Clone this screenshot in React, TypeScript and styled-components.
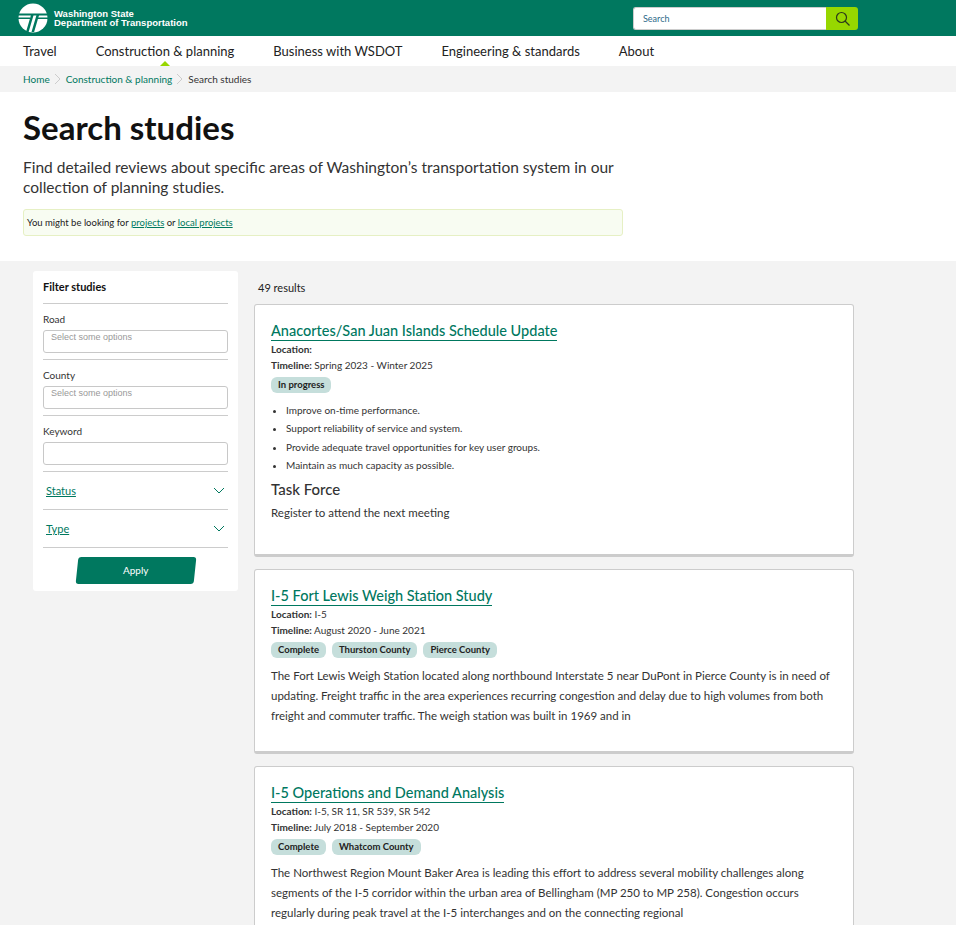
import { createGlobalStyle } from "styled-components";
import styled from "styled-components";

const GlobalStyle = createGlobalStyle`
  html, body {
    margin: 0;
    padding: 0;
    height: 925px;
    overflow: hidden;
    background: #fff;
    font-family: Lato, "Liberation Sans", sans-serif;
    color: #333;
  }
  * { box-sizing: border-box; }
`;

const Masthead = styled.header`
  height: 36px;
  background: #00785f;
  display: flex;
  align-items: center;
  padding-left: 18px;
`;

const Brand = styled.a`
  display: flex;
  align-items: center;
  gap: 6px;
  width: 615px;
`;

const BrandText = styled.div`
  color: #fff;
  font-family: "Liberation Sans", sans-serif;
  font-weight: 700;
  font-size: 9.5px;
  line-height: 9.5px;
`;

const SearchBox = styled.form`
  display: flex;
  width: 225px;
  height: 23px;
`;

const SearchInput = styled.div`
  flex: 1;
  background: #fff;
  border: 1px solid #ccc;
  border-right: none;
  border-radius: 3px 0 0 3px;
  font-size: 9px;
  line-height: 21px;
  padding-left: 9px;
  color: #2d6a8a;
`;

const SearchButton = styled.div`
  width: 32px;
  background: #97d700;
  border-radius: 0 3px 3px 0;
  display: flex;
  align-items: center;
  justify-content: center;
`;

const MainNav = styled.nav`
  height: 30px;
  display: flex;
  align-items: center;
  padding-left: 23px;
  gap: 39px;
  font-size: 13px;
  color: #222;
`;

const NavItem = styled.span<{ $active?: boolean }>`
  position: relative;
  line-height: 30px;
  ${({ $active }) =>
    $active &&
    `&::after {
      content: "";
      position: absolute;
      left: 50%;
      bottom: 0;
      margin-left: -5px;
      border-left: 5px solid transparent;
      border-right: 5px solid transparent;
      border-bottom: 5px solid #97d700;
    }`}
`;

const Breadcrumb = styled.div`
  height: 26px;
  background: #f3f3f3;
  display: flex;
  align-items: center;
  padding-left: 23px;
  font-size: 10px;
  color: #333;
`;

const CrumbLink = styled.a`
  color: #00785f;
`;

const CrumbSep = styled.svg`
  width: 16px;
  height: 12px;
`;

const Intro = styled.section`
  height: 169px;
  padding: 15px 23px 0;
`;

const Title = styled.h1`
  margin: 0;
  font-size: 33px;
  line-height: 40px;
  font-weight: 700;
  color: #111;
`;

const Lead = styled.p`
  margin: 10px 0 0;
  width: 600px;
  font-size: 15.5px;
  line-height: 20px;
  color: #333;
`;

const Notice = styled.div`
  margin-top: 12px;
  width: 600px;
  height: 27px;
  background: #f8fcf2;
  border: 1px solid #e6f0c4;
  border-radius: 3px;
  font-size: 9.5px;
  line-height: 25px;
  padding-left: 3px;
  color: #222;
`;

const InlineLink = styled.a`
  color: #00785f;
  text-decoration: underline;
`;

const Body = styled.div`
  background: #f3f3f3;
  display: flex;
  align-items: flex-start;
  padding: 10px 0 0 33px;
  height: 664px;
`;

const Sidebar = styled.aside`
  width: 205px;
  height: 320px;
  background: #fff;
  border-radius: 3px;
  padding: 0 10px;
`;

const SideTitle = styled.div`
  height: 33px;
  line-height: 32px;
  font-size: 11px;
  font-weight: 700;
  color: #111;
  border-bottom: 1px solid #ccc;
`;

const FilterGroup = styled.div`
  height: 56px;
  padding-top: 8px;
  border-bottom: 1px solid #ccc;
`;

const FilterLabel = styled.div`
  font-size: 10px;
  line-height: 14px;
  height: 18px;
  color: #333;
`;

const SelectBox = styled.div`
  height: 23px;
  border: 1px solid #c8c8c8;
  border-radius: 3px;
  padding-left: 7px;
  font-family: "Liberation Sans", sans-serif;
  font-size: 9px;
  line-height: 13px;
  color: #999;
`;

const Accordion = styled.div`
  height: 38px;
  display: flex;
  align-items: center;
  justify-content: space-between;
  padding: 0 3px;
  border-bottom: 1px solid #ccc;
  font-size: 11px;
  color: #00785f;
  text-decoration: underline;
  &:last-of-type { border-bottom: none; }
`;

const ApplyButton = styled.div`
  width: 118px;
  height: 27px;
  margin: 9px auto 0;
  background: #00785f;
  color: #fff;
  font-size: 10px;
  line-height: 27px;
  text-align: center;
  border-radius: 3px;
  transform: skewX(-6deg);
`;

const ApplyLabel = styled.span`
  display: inline-block;
  transform: skewX(6deg);
`;

const Results = styled.main`
  width: 600px;
  margin-left: 16px;
`;

const ResultCount = styled.div`
  height: 33px;
  padding-left: 4px;
  font-size: 11px;
  line-height: 33px;
  color: #222;
`;

const Card = styled.article<{ $height: number }>`
  height: ${({ $height }) => $height}px;
  flex-shrink: 0;
  margin-bottom: 12px;
  background: #fff;
  border: 1px solid #ccc;
  border-bottom: 3px solid #ccc;
  border-radius: 3px;
  padding: 15px 16px 0;
`;

const CardTitle = styled.a`
  display: inline-block;
  font-size: 14.5px;
  line-height: 18px;
  font-weight: 500;
  color: #00785f;
  border-bottom: 1px solid #00785f;
`;

const Meta = styled.div`
  font-size: 10px;
  line-height: 16px;
  color: #333;
  & b { font-weight: 700; }
`;

const TagRow = styled.div`
  display: flex;
  gap: 6px;
  margin: 4px 0 8px;
`;

const Tag = styled.span`
  height: 16px;
  line-height: 16px;
  padding: 0 7px;
  background: #c5dedb;
  border-radius: 6px;
  font-size: 9.5px;
  font-weight: 700;
  color: #222;
`;

const Bullets = styled.ul`
  margin: 0;
  padding: 0 0 0 15px;
  font-size: 10px;
  line-height: 18.3px;
  color: #333;
`;

const SubHeading = styled.h3`
  margin: 5px 0 4px;
  font-size: 15px;
  line-height: 20px;
  font-weight: 500;
  color: #333;
`;

const CardText = styled.p`
  margin: 0;
  font-size: 11.5px;
  line-height: 20px;
  color: #333;
`;

const Chevron = () => (
  <svg width="12" height="8" viewBox="0 0 12 8" fill="none" stroke="#00785f" strokeWidth="1">
    <path d="M1 1l5 5 5-5" />
  </svg>
);

const Sep = () => (
  <CrumbSep viewBox="0 0 16 12" fill="none" stroke="#ccc" strokeWidth="1">
    <path d="M5 1l5 5-5 5" />
  </CrumbSep>
);

const Logo = () => (
  <svg width="30" height="30" viewBox="0 0 30 30">
    <circle cx="15" cy="15" r="14.5" fill="#fff" />
    <path d="M0 10.5h30v2H0zM0 14.5h12v1.6H0zM18 14.5h12v1.6H18z" fill="#00785f" />
    <path d="M13 12l-5 17h2.6l5-17zM18.5 12l-5 17h2.6l5-17z" fill="#00785f" />
  </svg>
);

export default function App() {
  return (
    <>
      <GlobalStyle />
      <Masthead>
        <Brand>
          <Logo />
          <BrandText>
            Washington State
            <br />
            Department of Transportation
          </BrandText>
        </Brand>
        <SearchBox>
          <SearchInput>Search</SearchInput>
          <SearchButton>
            <svg width="15" height="15" viewBox="0 0 15 15" fill="none" stroke="#2c3a1a" strokeWidth="1.2">
              <circle cx="6.5" cy="6.5" r="5" />
              <path d="M10 10l4.5 4.5" />
            </svg>
          </SearchButton>
        </SearchBox>
      </Masthead>
      <MainNav>
        <NavItem>Travel</NavItem>
        <NavItem $active>Construction &amp; planning</NavItem>
        <NavItem>Business with WSDOT</NavItem>
        <NavItem>Engineering &amp; standards</NavItem>
        <NavItem>About</NavItem>
      </MainNav>
      <Breadcrumb>
        <CrumbLink>Home</CrumbLink>
        <Sep />
        <CrumbLink>Construction &amp; planning</CrumbLink>
        <Sep />
        <span>Search studies</span>
      </Breadcrumb>
      <Intro>
        <Title>Search studies</Title>
        <Lead>
          Find detailed reviews about specific areas of Washington’s transportation system in our collection of planning studies.
        </Lead>
        <Notice>
          You might be looking for <InlineLink>projects</InlineLink> or <InlineLink>local projects</InlineLink>
        </Notice>
      </Intro>
      <Body>
        <Sidebar>
          <SideTitle>Filter studies</SideTitle>
          <FilterGroup>
            <FilterLabel>Road</FilterLabel>
            <SelectBox>Select some options</SelectBox>
          </FilterGroup>
          <FilterGroup>
            <FilterLabel>County</FilterLabel>
            <SelectBox>Select some options</SelectBox>
          </FilterGroup>
          <FilterGroup>
            <FilterLabel>Keyword</FilterLabel>
            <SelectBox />
          </FilterGroup>
          <Accordion>
            Status
            <Chevron />
          </Accordion>
          <Accordion>
            Type
            <Chevron />
          </Accordion>
          <ApplyButton>
            <ApplyLabel>Apply</ApplyLabel>
          </ApplyButton>
        </Sidebar>
        <Results>
          <ResultCount>49 results</ResultCount>
          <Card $height={253}>
            <CardTitle>Anacortes/San Juan Islands Schedule Update</CardTitle>
            <Meta><b>Location:</b></Meta>
            <Meta><b>Timeline:</b> Spring 2023 - Winter 2025</Meta>
            <TagRow><Tag>In progress</Tag></TagRow>
            <Bullets>
              <li>Improve on-time performance.</li>
              <li>Support reliability of service and system.</li>
              <li>Provide adequate travel opportunities for key user groups.</li>
              <li>Maintain as much capacity as possible.</li>
            </Bullets>
            <SubHeading>Task Force</SubHeading>
            <CardText>Register to attend the next meeting</CardText>
          </Card>
          <Card $height={185}>
            <CardTitle>I-5 Fort Lewis Weigh Station Study</CardTitle>
            <Meta><b>Location:</b> I-5</Meta>
            <Meta><b>Timeline:</b> August 2020 - June 2021</Meta>
            <TagRow>
              <Tag>Complete</Tag>
              <Tag>Thurston County</Tag>
              <Tag>Pierce County</Tag>
            </TagRow>
            <CardText>
              The Fort Lewis Weigh Station located along northbound Interstate 5 near DuPont in Pierce County is in need of updating. Freight traffic in the area experiences recurring congestion and delay due to high volumes from both freight and commuter traffic. The weigh station was built in 1969 and in
            </CardText>
          </Card>
          <Card $height={185}>
            <CardTitle>I-5 Operations and Demand Analysis</CardTitle>
            <Meta><b>Location:</b> I-5, SR 11, SR 539, SR 542</Meta>
            <Meta><b>Timeline:</b> July 2018 - September 2020</Meta>
            <TagRow>
              <Tag>Complete</Tag>
              <Tag>Whatcom County</Tag>
            </TagRow>
            <CardText>
              The Northwest Region Mount Baker Area is leading this effort to address several mobility challenges along segments of the I-5 corridor within the urban area of Bellingham (MP 250 to MP 258). Congestion occurs regularly during peak travel at the I-5 interchanges and on the connecting regional
            </CardText>
          </Card>
        </Results>
      </Body>
    </>
  );
}
